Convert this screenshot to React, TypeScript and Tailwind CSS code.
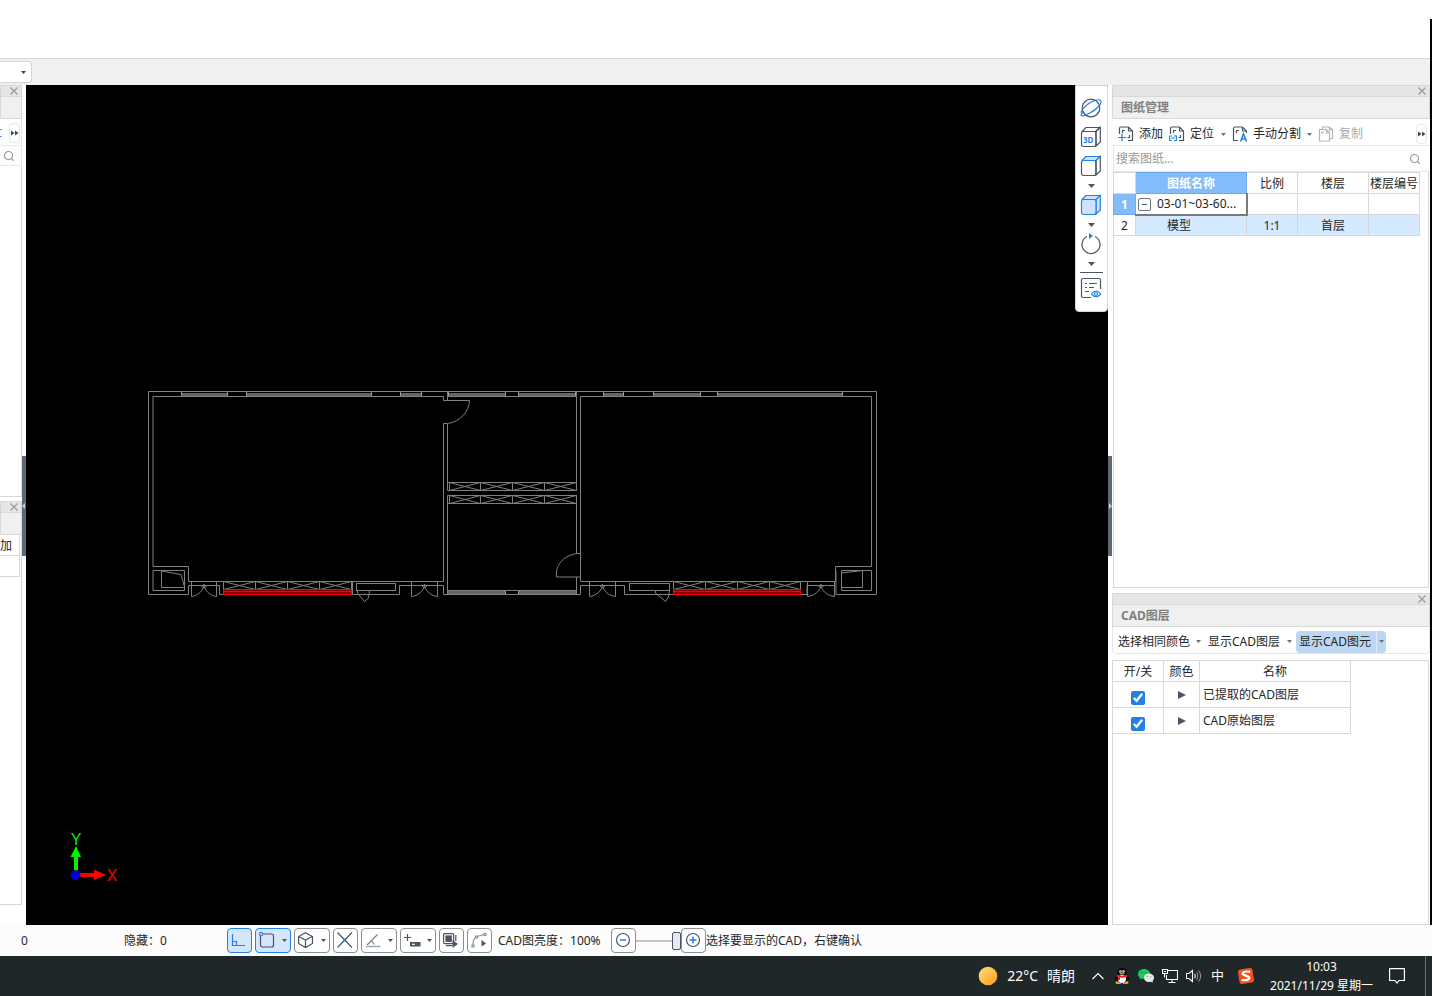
import React from "react";
import type { ReactNode } from "react";

const INK = "#4b5563";
const BLUE = "#2680eb";

function Caret({ className = "text-gray-500" }: { className?: string }) {
  return (
    <svg viewBox="0 0 5 3" className={`h-[3px] w-[5px] shrink-0 ${className}`} aria-hidden="true">
      <path d="M0 0H5L2.5 3Z" fill="currentColor" />
    </svg>
  );
}

function CloseIcon() {
  return (
    <svg viewBox="0 0 8 8" className="size-2" aria-hidden="true">
      <path d="M.5 .5L7.5 7.5M7.5 .5L.5 7.5" stroke="#9a9a9a" strokeWidth="1.2" />
    </svg>
  );
}

function SearchIcon() {
  return (
    <svg viewBox="0 0 12 12" className="size-3 shrink-0" fill="none" stroke="#9a9a9a" strokeWidth="1.2" aria-hidden="true">
      <circle cx="5.5" cy="5.5" r="4" />
      <path d="M8.5 8.5L10.8 10.8" />
    </svg>
  );
}

function MoreButton() {
  return (
    <button aria-label="更多" className="flex h-5 w-[11px] shrink-0 items-center justify-center rounded border border-gray-200 bg-white">
      <svg viewBox="0 0 8 6" className="h-[6px] w-2 shrink-0" aria-hidden="true">
        <path d="M0 .5L3.500 3L0 5.500ZM4 .5L7.500 3L4 5.500Z" fill="#3f4654" />
      </svg>
    </button>
  );
}

function PanelTop({ title }: { title: string }) {
  return (
    <div className="shrink-0">
      <div className="flex h-3 items-center justify-end border border-[#d8d8d8] bg-[#e6e6e6] pr-[3px]">
        <button aria-label="关闭">
          <CloseIcon />
        </button>
      </div>
      <h2 className="flex h-[22px] items-center border-x border-b border-[#d8d8d8] bg-[#f0f0f0] pl-2 font-bold text-[#808080]">
        {title}
      </h2>
    </div>
  );
}

function Splitter({ flip = false }: { flip?: boolean }) {
  return (
    <div className="flex w-1 shrink-0 items-center bg-white pt-[2px]">
      <div className="flex h-[100px] w-1 items-center bg-[#5e6978]">
        <svg viewBox="0 0 4 6" className="h-[6px] w-1" aria-hidden="true">
          <path d={flip ? "M1 0L4 3L1 6Z" : "M3 0L0 3L3 6Z"} fill="#c7ccd3" />
        </svg>
      </div>
    </div>
  );
}

function LeftDock() {
  return (
    <aside className="grid w-[22px] shrink-0 grid-rows-[416fr_404fr] overflow-hidden bg-white pb-5">
      <section className="flex min-h-0 flex-col pb-1">
        <PanelTop title="" />
        <div className="flex h-[27px] shrink-0 items-center justify-between border-r border-b border-gray-200 pt-[2px] pr-px">
          <svg viewBox="0 0 2 8" className="h-2 w-[2px]" aria-hidden="true">
            <path d="M0 .5H1.500M0 7.500H1.500" stroke={BLUE} />
          </svg>
          <MoreButton />
        </div>
        <div className="flex h-5 shrink-0 items-center border-r border-b border-gray-200 pl-[3px]">
          <SearchIcon />
        </div>
        <div className="min-h-0 flex-1 border-r border-b border-[#d8d8d8]" />
      </section>
      <section className="flex min-h-0 flex-col">
        <PanelTop title="" />
        <div className="min-h-0 flex-1 border-r border-b border-[#d8d8d8]">
          <button className="flex h-[21px] w-5 items-center border-r border-b border-[#d8d8d8] pt-[2px]">
            加
          </button>
          <div className="h-[21px] w-5 border-r border-b border-[#d8d8d8]" />
        </div>
      </section>
    </aside>
  );
}

function Cabinets({ xs, y, h }: { xs: number[]; y: number; h: number }) {
  return (
    <>
      {xs.slice(0, -1).map((x, i) => (
        <path key={x} d={`M${x} ${y}H${xs[i + 1]}V${y + h}H${x}ZL${xs[i + 1]} ${y + h}M${x} ${y + h}L${xs[i + 1]} ${y}`} />
      ))}
    </>
  );
}

function DoubleDoor({ x, w }: { x: number; w: number }) {
  const m = x + w / 2;
  return (
    <path d={`M${x} 582V596.5C${m - 7} 596 ${m} 591 ${m} 584C${m} 591 ${m + 7} 596 ${x + w} 596.5V582M${m - 3} 585.5L${m} 588L${m + 3} 585.5`} />
  );
}

const topWindows: [number, number][] = [
  [181, 228], [246, 372], [400, 422], [448, 506], [518, 576], [603, 624], [653, 701], [717, 843],
];
const bottomWindows: [number, number][] = [[448, 506], [518, 576]];

function FloorPlan() {
  return (
    <svg viewBox="26 85 1082 840" className="block size-full" role="img" aria-label="CAD 平面图">
      <g fill="#646464">
        {topWindows.map(([a, b]) => (
          <g key={a}>
            <rect x={a} y="393" width={b - a} height="3" />
            <path d={`M${a + 0.5} 392V396M${b - 0.5} 392V396`} stroke="#9a9a9a" />
          </g>
        ))}
        {bottomWindows.map(([a, b]) => (
          <rect key={a} x={a} y="591" width={b - a} height="3" />
        ))}
        <path d="M505.500 591V594M518.500 591V594" stroke="#9a9a9a" />
      </g>
      <g fill="none" stroke="#808080" strokeWidth="1">
        <path d="M188.500 594.500H148.500V391.500H876.500V594.500H836" />
        <path d="M443.500 400.500V396.500H153V566.500H188.500V581.500H443.500" />
        <path d="M188.500 594.500V585.500H219.500V594.500H223" />
        <path d="M153 570.500H184.500V590.500H153ZM161.500 570.500V587.500H183.500M161.500 571L181 574.500L184.500 587" />
        <path d="M352.500 581.500V594.500H399.500V585.500H443.500V594.500H580.500V585.500H624.500V594.500H673" />
        <rect x="356.500" y="583.500" width="39" height="7" />
        <path d="M357.500 590V593L364.500 601.500L368.500 598L369.500 590" />
        <path d="M447.500 391.500V400.500M443.500 400.500H469.500C469 412 460 422 447.500 423.500H443.500V581.500M447.500 423.500V490.500H576.500V396.500M447.500 396.500H576.500M447.500 594V495.500H576.500V553.500M447.500 590.500H576.500" />
        <path d="M580.500 581.500V396.500H871.500V566.500H835.500V581.500H580.500" />
        <path d="M580.500 553.500C567 553 556.500 563 556.500 573V577H580.500M576.500 391.500V396M576.500 577V594.500" />
        <path d="M447.500 482.500H576.500M447.500 503.500H576.500" />
        <rect x="629.500" y="583.500" width="40" height="7" />
        <path d="M655.500 590V593L665.500 601.500L668.500 597L669.500 590" />
        <path d="M801 594.500H807V585.500H834" />
        <path d="M836 594.500V570.500M841.500 570.500H871.500V590.500H841.500V570.500M841.500 573L862.500 570.500V587.500H841.500" />
        <DoubleDoor x={191.5} w={25} />
        <DoubleDoor x={411.5} w={26} />
        <DoubleDoor x={589.5} w={26} />
        <DoubleDoor x={807.5} w={27} />
        <Cabinets xs={[223.5, 255.5, 287.5, 319.5, 351.5]} y={581.5} h={8} />
        <Cabinets xs={[673.5, 705.5, 737.5, 769.5, 800.5]} y={581.5} h={8} />
        <Cabinets xs={[449.5, 480.5, 512.5, 544.5, 576.5]} y={482.5} h={8} />
        <Cabinets xs={[449.5, 480.5, 512.5, 544.5, 576.5]} y={495.5} h={8} />
      </g>
      <g fill="#8c0000" stroke="#ff0000">
        <rect x="223.500" y="589.500" width="128" height="5" />
        <rect x="673.500" y="589.500" width="127" height="5" />
        <path d="M224 591.500H352M674 591.500H801" />
      </g>
      <path d="M76 871V856" stroke="#00f000" strokeWidth="4" />
      <path d="M70.500 857L76 846L81 857Z" fill="#00f000" />
      <path d="M80 875H95" stroke="#ff0000" strokeWidth="4" />
      <path d="M94 869.500L106 875L94 880Z" fill="#ff0000" />
      <circle cx="75.500" cy="875" r="5" fill="#0000c8" />
      <text x="76" y="845" textAnchor="middle" fontSize="16" fill="#00f000" className="font-['Liberation_Sans_Narrow','Liberation_Sans',sans-serif]">Y</text>
      <text x="112" y="881" textAnchor="middle" fontSize="16" fill="#ff0000" className="font-['Liberation_Sans_Narrow','Liberation_Sans',sans-serif]">X</text>
    </svg>
  );
}

function Cube({ front = "none", top = "none" }: { front?: string; top?: string }) {
  const edge = front !== "none" ? BLUE : INK;
  return (
    <>
      <path d="M16 5L20.300 1V16L16 20Z" fill={front} stroke={edge} />
      <rect x="1.500" y="5.500" width="14.500" height="15" rx="2" fill={front} stroke={edge} />
      <path d="M2 5.500L6 1.500H20L16 5.500Z" fill={top} stroke={top !== "none" ? BLUE : INK} />
    </>
  );
}

function ViewButton({ label, children }: { label: string; children: ReactNode }) {
  return (
    <button aria-label={label} className="flex size-[22px] shrink-0">
      <svg viewBox="0 0 22 22" className="size-[22px]" fill="none" stroke={INK} strokeWidth="1.2" strokeLinejoin="round">
        {children}
      </svg>
    </button>
  );
}

function MenuCaret({ label }: { label: string }) {
  return (
    <button aria-label={label} className="flex h-[17px] w-6 items-center justify-center">
      <svg viewBox="0 0 7 4" className="h-1 w-[7px]" aria-hidden="true">
        <path d="M0 0H7L3.500 4Z" fill={INK} />
      </svg>
    </button>
  );
}

function ViewTools() {
  return (
    <div className="absolute top-0 right-0 flex w-[33px] flex-col items-center rounded-b border border-gray-300 bg-white pt-[11px] pr-px pb-3">
      <ViewButton label="动态观察">
        <circle cx="11" cy="11" r="8.800" />
        <path d="M3.500 14.500C-1 19 1 20.500 9 16.500C18 12 22.500 6 20.500 3.500C18.500 1.500 12 4 7.500 7.500C4 10 1.500 13 1 15.500" stroke={BLUE} />
      </ViewButton>
      <div className="h-[7px]" />
      <ViewButton label="三维">
        <Cube />
        <text x="3" y="16.500" fontSize="8" fontWeight="700" fill={BLUE} stroke="none">3D</text>
      </ViewButton>
      <div className="h-[7px]" />
      <ViewButton label="俯视">
        <Cube top="#cfe2fb" />
      </ViewButton>
      <MenuCaret label="视图选项" />
      <ViewButton label="着色">
        <Cube front="#cfe2fb" top="#cfe2fb" />
      </ViewButton>
      <MenuCaret label="着色选项" />
      <ViewButton label="旋转">
        <path d="M7 3.500A9 9 0 1 0 15 3.500" />
        <path d="M9 0L13 3L9 6Z" fill={BLUE} stroke="none" />
      </ViewButton>
      <MenuCaret label="旋转选项" />
      <div className="mb-1 h-px w-[23px] bg-gray-600" />
      <ViewButton label="显示设置">
        <path d="M11 20.500H3Q1.500 20.500 1.500 19V3Q1.500 1.500 3 1.500H19Q20.500 1.500 20.500 3V12" />
        <path d="M5 6.500H7M9 6.500H17M5 10.500H7M9 10.500H14M5 14.500H9" />
        <path d="M11.500 17Q16 11 20.800 17Q16 22.500 11.500 17Z" stroke={BLUE} />
        <circle cx="16" cy="17" r="1.500" stroke={BLUE} />
      </ViewButton>
    </div>
  );
}

function SheetIcon({ mark, muted = false }: { mark?: ReactNode; muted?: boolean }) {
  return (
    <svg viewBox="0 0 16 16" className="size-4 shrink-0" fill="none" stroke={muted ? "#b5b5b5" : INK} strokeWidth="1.2" aria-hidden="true">
      {mark}
    </svg>
  );
}

const frame = "M1.500 8V2.500Q1.500 1 3 1H10.500L14.500 5V14.500H10M4.500 7V4.500H7M10.500 1V5H14.500M11.500 9V11.500H9.500";

function DrawingPanel() {
  const cell = "border border-[#d8d8d8] px-0 pt-px pb-0 text-center font-normal";
  return (
    <section className="flex min-h-0 flex-col pb-[5px]">
      <PanelTop title="图纸管理" />
      <div className="mt-px flex h-[26px] shrink-0 items-center border-b border-gray-200 pt-[3px] pr-[3px] pl-[6px]">
        <button className="flex items-center gap-[5px] whitespace-nowrap">
          <SheetIcon mark={<><path d={frame} /><path d="M0 11.500H8M4 7.500V15.500" stroke={BLUE} /></>} />
          添加
        </button>
        <button className="ml-[6px] flex items-center gap-[5px] whitespace-nowrap">
          <SheetIcon mark={<><path d={frame} /><path d="M3 10H.6V14.500H3M5 10H7.400V14.500H5M2.500 12.200H5.500" stroke={BLUE} /></>} />
          定位
        </button>
        <button aria-label="定位选项" className="ml-[7px] flex h-4 items-center">
          <Caret />
        </button>
        <button className="ml-[6px] flex items-center gap-[5px] whitespace-nowrap">
          <SheetIcon mark={<><path d="M6 14.500H1.500V2.500Q1.500 1 3 1H10.500L14.500 5V7M4.500 7V4.500H7M10.500 1V5H14.500" /><path d="M8.500 15.500L11.500 8L14.500 15.500M9.500 13H13.500" stroke={BLUE} strokeWidth="1.600" /></>} />
          手动分割
        </button>
        <button aria-label="手动分割选项" className="ml-[6px] flex h-4 items-center">
          <Caret />
        </button>
        <button disabled className="ml-[6px] flex items-center gap-[5px] whitespace-nowrap text-[#aaaaaa]">
          <SheetIcon muted mark={<><path d="M4.500 3V1H11.500L14.500 4V12.500H12M11.500 1V4H14.500" /><path d="M1.500 3.500H8.500L11.500 6.500V15H1.500ZM4 8V6H6M8.500 3.500V7H11.500" /></>} />
          复制
        </button>
        <div className="ml-auto">
          <MoreButton />
        </div>
      </div>
      <label className="mx-px mt-px flex h-[25px] shrink-0 items-center border-b border-l border-gray-200 pr-2 pl-[2px]">
        <input aria-label="搜索图纸" placeholder="搜索图纸..." className="min-w-0 flex-1 outline-none placeholder:text-[#999999]" />
        <SearchIcon />
      </label>
      <div className="mr-[1px] ml-px min-h-0 flex-1 border-x border-b border-[#d8d8d8]">
        <table className="-ml-px w-[307px] table-fixed border-collapse">
          <colgroup>
            <col className="w-[22px]" />
            <col className="w-[111px]" />
            <col className="w-[51px]" />
            <col className="w-[71px]" />
            <col className="w-[51px]" />
          </colgroup>
          <thead>
            <tr className="h-[21px]">
              <th className={cell} />
              <th className="border border-[#6aaaf0] bg-[#83bbfb] px-0 pt-px pb-0 font-bold text-white">图纸名称</th>
              <th className={cell}>比例</th>
              <th className={cell}>楼层</th>
              <th className={`${cell} whitespace-nowrap`}>楼层编号</th>
            </tr>
          </thead>
          <tbody>
            <tr className="h-[21px]">
              <th className="border border-[#6aaaf0] bg-[#83bbfb] px-0 pt-px pb-0 font-bold text-white">1</th>
              <td className="border border-r-2 border-b-2 border-[#d8d8d8] border-r-[#7a7a7a] border-b-[#7a7a7a] px-0 pt-px pb-0">
                <div className="flex items-center gap-[6px] pl-[2px] whitespace-nowrap">
                  <button aria-label="折叠" className="flex size-[13px] items-center justify-center rounded-xs border border-gray-500">
                    <span className="h-px w-[5px] bg-gray-600" />
                  </button>
                  03-01~03-60...
                </div>
              </td>
              <td className={cell} />
              <td className={cell} />
              <td className={cell} />
            </tr>
            <tr className="h-[21px] bg-[#d6eaff]">
              <th className={`${cell} bg-white`}>2</th>
              <td className="border border-[#d8d8d8] px-0 pt-px pb-0 pl-[31px]">模型</td>
              <td className={cell}>1:1</td>
              <td className={cell}>首层</td>
              <td className={cell} />
            </tr>
          </tbody>
        </table>
      </div>
    </section>
  );
}

function LayerPanel() {
  const cell = "border border-[#d8d8d8] p-0";
  return (
    <section className="flex min-h-0 flex-col">
      <PanelTop title="CAD图层" />
      <div className="flex h-[27px] shrink-0 items-center rounded-b border-x border-b border-gray-200 pt-[3px] pl-[5px] whitespace-nowrap">
        <button>选择相同颜色</button>
        <button aria-label="选择相同颜色选项" className="ml-[6px] flex h-4 items-center">
          <Caret />
        </button>
        <button className="ml-[7px]">显示CAD图层</button>
        <button aria-label="显示CAD图层选项" className="ml-[7px] flex h-4 items-center">
          <Caret />
        </button>
        <div className="ml-1 flex h-[22px] items-stretch rounded-sm bg-[#bdd7f3]">
          <button className="pr-[5px] pl-[3px]">显示CAD图元</button>
          <button aria-label="显示CAD图元选项" className="flex w-[10px] items-center justify-center border-l border-blue-100">
            <Caret />
          </button>
        </div>
      </div>
      <div className="mt-[6px] mr-px min-h-0 flex-1 border border-[#d8d8d8]">
        <table className="-mt-px -ml-px w-[239px] table-fixed border-collapse">
          <colgroup>
            <col className="w-[51px]" />
            <col className="w-9" />
            <col className="w-[151px]" />
          </colgroup>
          <thead>
            <tr className="h-[21px]">
              <th className="border border-[#d8d8d8] px-0 pt-px pb-0 font-normal">开/关</th>
              <th className="border border-[#d8d8d8] px-0 pt-px pb-0 font-normal">颜色</th>
              <th className="border border-[#d8d8d8] px-0 pt-px pb-0 font-normal">名称</th>
            </tr>
          </thead>
          <tbody>
            {["已提取的CAD图层", "CAD原始图层"].map((name) => (
              <tr key={name} className="h-[26px]">
                <td className={cell}>
                  <input type="checkbox" defaultChecked aria-label={name} className="mx-auto mt-[6px] block size-[14px] accent-[#2680e0]" />
                </td>
                <td className={cell}>
                  <button aria-label={`展开${name}`} className="mx-auto block">
                    <svg viewBox="0 0 8 8" className="size-2" aria-hidden="true">
                      <path d="M0 0L8 4L0 8Z" fill="#4b5563" />
                    </svg>
                  </button>
                </td>
                <td className={`${cell} pl-[3px]`}>{name}</td>
              </tr>
            ))}
          </tbody>
        </table>
      </div>
    </section>
  );
}

function StatusButton({ label, active = false, menu = false, children }: { label: string; active?: boolean; menu?: boolean; children: ReactNode }) {
  return (
    <button
      aria-label={label}
      className={`flex h-[25px] shrink-0 items-center rounded border px-[3px] ${menu ? "w-9 justify-between" : "w-[25px]"} ${active ? "border-[#2680eb] bg-[#d5e5fb]" : "border-[#8e8e8e] bg-white"}`}
    >
      <svg viewBox="0 0 17 17" className="size-[17px] shrink-0" fill="none" stroke={INK} strokeWidth="1.2" aria-hidden="true">
        {children}
      </svg>
      {menu && <Caret className="text-gray-600" />}
    </button>
  );
}

function StatusBar() {
  return (
    <footer className="flex h-[31px] shrink-0 items-center bg-[#fcfcfc] whitespace-nowrap">
      <span className="w-[103px] pl-[21px]">0</span>
      <span className="w-[103px] pl-[21px]">隐藏：0</span>
      <div className="ml-[21px] flex gap-[3px]">
        <StatusButton label="正交" active>
          <path d="M1.500 2V13.500H14M1.500 9.500H5.500V13.500" stroke={BLUE} />
        </StatusButton>
        <StatusButton label="对象捕捉" active menu>
          <rect x="1.500" y="2" width="13" height="13" rx="2" />
          <circle cx="2" cy="2" r="1.600" fill="#d5e5fb" stroke={BLUE} />
        </StatusButton>
        <StatusButton label="三维捕捉" menu>
          <path d="M7.500 .8L14.500 4.500V11.500L7.500 15.500L.6 11.500V4.500ZM.6 4.500L7.500 8L14.500 4.500M7.500 8V15.500" />
        </StatusButton>
        <StatusButton label="交点">
          <path d="M.5 .5L15 15.500M15 .5L.5 15.500" />
          <circle cx="7.800" cy="8" r="1.600" fill={BLUE} stroke="none" />
        </StatusButton>
        <StatusButton label="角度" menu>
          <path d="M2 13L12.500 2.500M6 8L9.500 12.500" stroke="#77808d" />
          <path d="M1 14.500H15.500" stroke="#a1a7b0" strokeWidth="1.500" />
        </StatusButton>
        <StatusButton label="动态输入" menu>
          <path d="M0 5.500H7M3.500 2V9" />
          <rect x="6" y="10" width="10.500" height="4.500" fill={INK} stroke="none" />
          <path d="M8 12.300H11" stroke="white" />
        </StatusButton>
        <StatusButton label="选择集">
          <rect x=".6" y="1.600" width="10" height="10" rx="1" />
          <rect x="2.400" y="3.400" width="6.500" height="6.500" fill={INK} stroke="none" />
          <path d="M12.800 3V9M3 13.600H9" />
          <path d="M9.500 8L15 12L9.500 16Z" fill={INK} stroke="none" />
        </StatusButton>
        <StatusButton label="夹点编辑">
          <path d="M2 13Q2 6 6 4.500L13 2.500" stroke="#8a919c" />
          <path d="M1 13H3V15H1ZM4.500 4H6.500V6H4.500ZM13 1.500H15V3.500H13Z" stroke="#8a919c" fill="white" />
          <path d="M10.500 8L15 11.500L10.500 14.500Z" fill={INK} stroke="none" />
        </StatusButton>
      </div>
      <label htmlFor="brightness" className="ml-[6px] w-[113px]">CAD图亮度：100%</label>
      <StatusButton label="降低亮度">
        <circle cx="8" cy="8" r="6.500" />
        <path d="M5 8H11" stroke={BLUE} strokeWidth="1.500" />
      </StatusButton>
      <input
        id="brightness"
        type="range"
        defaultValue={100}
        className="h-[18px] w-[45px] shrink-0 appearance-none bg-transparent [&::-webkit-slider-runnable-track]:h-[2px] [&::-webkit-slider-runnable-track]:bg-[#c4c4c4] [&::-webkit-slider-thumb]:mt-[-8px] [&::-webkit-slider-thumb]:h-[18px] [&::-webkit-slider-thumb]:w-[9px] [&::-webkit-slider-thumb]:appearance-none [&::-webkit-slider-thumb]:rounded-xs [&::-webkit-slider-thumb]:border [&::-webkit-slider-thumb]:border-gray-600 [&::-webkit-slider-thumb]:bg-[#e6eaf0]"
      />
      <StatusButton label="提高亮度">
        <circle cx="8" cy="8" r="6.500" />
        <path d="M4.500 8H11.500M8 4.500V11.500" stroke={BLUE} strokeWidth="1.500" />
      </StatusButton>
      <span>选择要显示的CAD，右键确认</span>
    </footer>
  );
}

function TrayButton({ label, children }: { label: string; children: ReactNode }) {
  return (
    <button aria-label={label} className="size-4 shrink-0">
      <svg viewBox="0 0 16 16" className="size-4" fill="none" stroke="white" strokeWidth="1.1">
        {children}
      </svg>
    </button>
  );
}

function Taskbar() {
  return (
    <nav aria-label="任务栏" className="flex h-10 shrink-0 items-center justify-end bg-[#1f2729] pr-[6px] text-white">
      <button className="mr-[15px] flex items-center gap-[9px] text-sm">
        <svg viewBox="0 0 20 20" className="size-5" aria-hidden="true">
          <defs>
            <linearGradient id="sun" x1="0" y1="0" x2="1" y2="1">
              <stop offset="0" stopColor="#ffe27a" />
              <stop offset="1" stopColor="#ff9a1c" />
            </linearGradient>
          </defs>
          <circle cx="10" cy="10" r="9.300" fill="url(#sun)" />
        </svg>
        <span>22°C</span>
        <span>晴朗</span>
      </button>
      <div className="flex gap-2">
        <TrayButton label="显示隐藏的图标">
          <path d="M2.500 11L8 5.500L13.500 11" />
        </TrayButton>
        <TrayButton label="QQ">
          <g stroke="none">
            <ellipse cx="4.500" cy="14.500" rx="3" ry="1.500" fill="#f5a81c" />
            <ellipse cx="11.500" cy="14.500" rx="3" ry="1.500" fill="#f5a81c" />
            <path d="M8 0C4.800 0 3.500 2 3.500 5C2.500 7 .5 9 .8 12C1.500 12.500 2 11 2.500 10.500C3 14 5 15 8 15C11 15 13 14 13.500 10.500C14 11 14.500 12.500 15.200 12C15.500 9 13.500 7 12.500 5C12.500 2 11.200 0 8 0Z" fill="#050505" />
            <ellipse cx="8" cy="11" rx="4" ry="4" fill="white" />
            <circle cx="6.500" cy="3.500" r="1.300" fill="white" />
            <circle cx="9.500" cy="3.500" r="1.300" fill="white" />
            <circle cx="6.800" cy="3.700" r=".5" fill="black" />
            <circle cx="9.200" cy="3.700" r=".5" fill="black" />
            <ellipse cx="8" cy="5.700" rx="2.500" ry=".8" fill="#f5a81c" />
            <path d="M2.500 6.500Q8 9 13.500 6.500L13 9Q10 10 6 9.500V12H4V9L2.500 8.500Z" fill="#ee2323" />
          </g>
        </TrayButton>
        <TrayButton label="微信">
          <g stroke="none">
            <path d="M6 1C2.600 1 0 3.200 0 6C0 7.600 .8 8.800 2 9.700L1.500 11.500L3.700 10.500L6 11C9.300 11 12 8.800 12 6S9.300 1 6 1Z" fill="#20c95b" />
            <path d="M11 5.500C8.200 5.500 6 7.300 6 9.700S8.200 14 11 14L13 13.700L15 14.700L14.500 12.900C15.500 12.200 16 11 16 9.700C16 7.300 13.800 5.500 11 5.500Z" fill="#e4e8e6" />
            <circle cx="4" cy="4.500" r=".7" fill="#116d32" />
            <circle cx="8" cy="4.500" r=".7" fill="#116d32" />
            <circle cx="9.500" cy="8.500" r=".6" fill="#788" />
            <circle cx="12.700" cy="8.500" r=".6" fill="#788" />
          </g>
        </TrayButton>
        <TrayButton label="网络">
          <path d="M6 2.500H15.500V11.500H4.500V7M10 11.500V14.500M6.500 14.500H13.500M.5 1.500H5.500V5.500H.5ZM2.500 5.500V9.500" />
          <path d="M2 3.500H4" />
        </TrayButton>
        <TrayButton label="音量">
          <path d="M.5 5.500H3L6.500 2.500V13.500L3 10.500H.5ZM8.500 6Q10 8 8.500 10" />
          <path d="M10.500 4Q13 8 10.500 12M12.500 2.500Q17 8 12.500 13.500" stroke="#8b9092" />
        </TrayButton>
      </div>
      <button className="ml-[9px] text-[13px]">中</button>
      <button aria-label="搜狗输入法" className="ml-[14px] size-4">
        <svg viewBox="0 0 16 16" className="size-4">
          <rect x=".7" y=".7" width="14.600" height="14.600" rx="2.500" fill="#f4511e" transform="rotate(-9 8 8)" />
          <path d="M12.300 3.800Q5 2.800 4.600 5.500C4.400 7.800 11.500 7.400 11.300 10Q10.800 12.800 3.600 12" fill="none" stroke="white" strokeWidth="2.200" />
        </svg>
      </button>
      <button className="ml-4 text-center leading-[19px] whitespace-nowrap">
        <time className="block">10:03</time>
        <time className="block">2021/11/29 星期一</time>
      </button>
      <button aria-label="通知" className="ml-4 size-4">
        <svg viewBox="0 0 16 16" className="size-4" fill="none" stroke="white" strokeWidth="1.2">
          <path d="M.6 .6H15.400V12.500H10L8 15L6 12.500H.6Z" />
        </svg>
      </button>
      <div className="ml-5 h-10 w-px bg-gray-500" />
    </nav>
  );
}

export default function App() {
  return (
    <div className="flex min-h-screen flex-col bg-white font-['Noto_Sans','Noto_Sans_CJK_SC',sans-serif] text-xs text-[#262626]">
      <div className="h-[19px] shrink-0" />
      <div className="flex flex-1 flex-col border-r-2 border-black">
        <header className="shrink-0 pt-[39px]">
          <div className="flex h-[27px] items-center border-t border-[#d8d8d8] bg-[#f0f0f0]">
            <div className="grid w-8 items-center overflow-hidden rounded-r border border-l-0 border-gray-300 bg-white">
              <select aria-label="楼层" className="col-start-1 row-start-1 h-5 w-full appearance-none outline-none">
                <option></option>
              </select>
              <div className="pointer-events-none col-start-1 row-start-1 mr-[5px] justify-self-end">
                <Caret className="text-gray-700" />
              </div>
            </div>
          </div>
        </header>
        <main className="flex flex-1">
          <LeftDock />
          <Splitter />
          <div className="relative min-w-0 flex-1 bg-black">
            <FloorPlan />
            <ViewTools />
          </div>
          <Splitter flip />
          <aside className="grid w-[318px] shrink-0 grid-rows-[508fr_332fr] bg-white">
            <DrawingPanel />
            <LayerPanel />
          </aside>
        </main>
      </div>
      <StatusBar />
      <Taskbar />
    </div>
  );
}
